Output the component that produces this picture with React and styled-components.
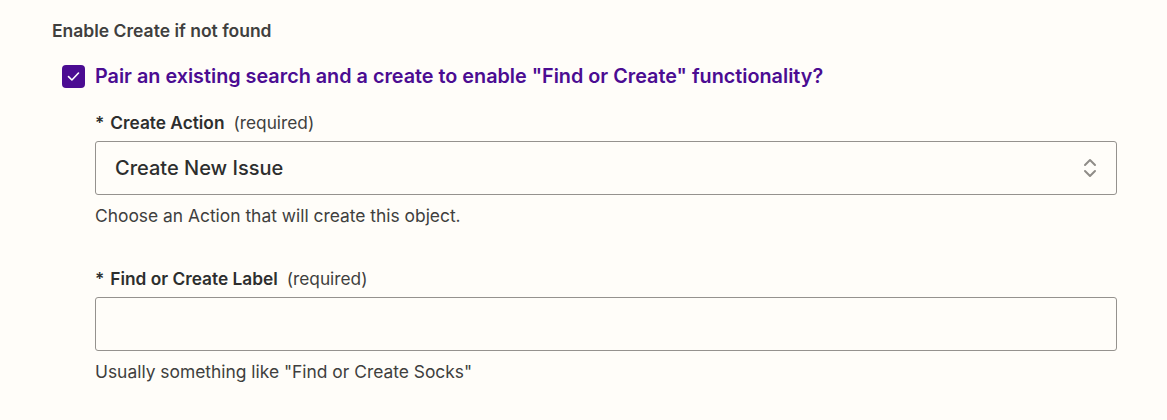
import React from "react";
import styled, { createGlobalStyle } from "styled-components";

const GlobalStyle = createGlobalStyle`
  html, body {
    margin: 0;
    padding: 0;
    background: #fffdf9;
  }
  body {
    font-family: Inter, "Noto Sans", sans-serif;
    color: #2d2e2e;
  }
`;

const Section = styled.div`
  padding: 20px 50px 0 52px;
  width: 1065px;
`;

const Heading = styled.div`
  font-size: 17.5px;
  font-weight: 600;
  color: #403f3e;
  line-height: 22px;
`;

const CheckRow = styled.label`
  display: flex;
  align-items: center;
  gap: 10px;
  margin: 22px 0 0 10px;
`;

const Box = styled.span`
  width: 23px;
  height: 23px;
  border-radius: 4px;
  background: #4b0c92;
  display: flex;
  align-items: center;
  justify-content: center;
`;

const CheckText = styled.span`
  font-size: 19.8px;
  font-weight: 600;
  color: #4b0c92;
  line-height: 24px;
`;

const Fields = styled.div`
  padding-left: 43px;
`;

const Field = styled.div`
  margin-top: ${props => props.$top}px;
`;

const Label = styled.div`
  font-size: 17.3px;
  line-height: 22px;
  color: #2d2e2e;
  display: flex;
  gap: 6px;
  margin-bottom: 7px;
`;

const Star = styled.span`
  font-weight: 600;
`;

const Name = styled.span`
  font-weight: 600;
`;

const Req = styled.span`
  color: #403f3e;
  margin-left: 3px;
`;

const Control = styled.div`
  height: 54px;
  box-sizing: border-box;
  border: 1px solid #95928e;
  border-radius: 3px;
  background: #fffdf9;
  display: flex;
  align-items: center;
  justify-content: space-between;
  padding: 0 18px 0 19px;
  font-size: 20px;
  font-weight: 500;
  color: #2d2e2e;
`;

const Help = styled.div`
  font-size: 17.4px;
  line-height: 22px;
  color: #403f3e;
  margin-top: 10px;
`;

const Chevrons = () => (
  <svg width="16" height="22" viewBox="0 0 16 22" fill="none">
    <path d="M3 8 L8 3 L13 8" stroke="#8f8c88" strokeWidth="2" strokeLinecap="round" strokeLinejoin="round" />
    <path d="M3 14 L8 19 L13 14" stroke="#8f8c88" strokeWidth="2" strokeLinecap="round" strokeLinejoin="round" />
  </svg>
);

const App = () => (
  <>
    <GlobalStyle />
    <Section>
      <Heading>Enable Create if not found</Heading>
      <CheckRow>
        <Box>
          <svg width="15" height="15" viewBox="0 0 15 15" fill="none">
            <path d="M2.5 7.6 L5.9 11 L12.5 4" stroke="#fff" strokeWidth="1.6" strokeLinecap="round" strokeLinejoin="round" />
          </svg>
        </Box>
        <CheckText>Pair an existing search and a create to enable "Find or Create" functionality?</CheckText>
      </CheckRow>
      <Fields>
        <Field $top={24}>
          <Label>
            <Star>*</Star>
            <Name>Create Action</Name>
            <Req>(required)</Req>
          </Label>
          <Control>
            <span>Create New Issue</span>
            <Chevrons />
          </Control>
          <Help>Choose an Action that will create this object.</Help>
        </Field>
        <Field $top={41}>
          <Label>
            <Star>*</Star>
            <Name>Find or Create Label</Name>
            <Req>(required)</Req>
          </Label>
          <Control />
          <Help>Usually something like "Find or Create Socks"</Help>
        </Field>
      </Fields>
    </Section>
  </>
);

export default App;
